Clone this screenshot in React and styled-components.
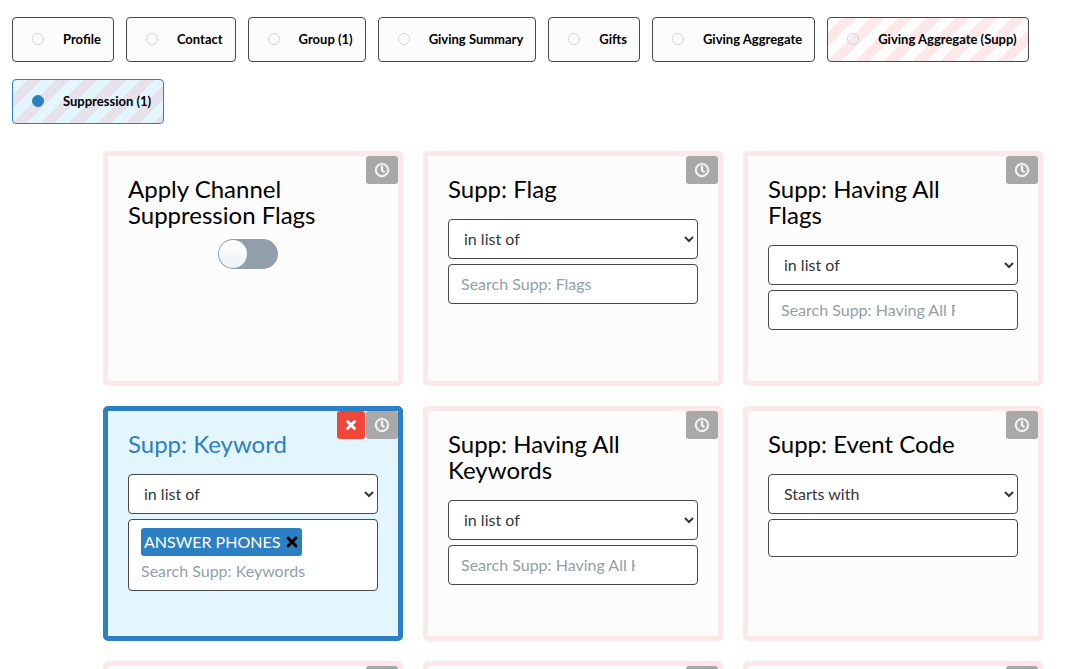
import React, { useState } from "react";
import styled, { createGlobalStyle } from "styled-components";
import { FaRegClock, FaTimes } from "react-icons/fa";

const GlobalStyle = createGlobalStyle`
  * {
    box-sizing: border-box;
  }
  body {
    margin: 0;
    background: #fff;
    color: #000;
    font-family: Lato, "Liberation Sans", sans-serif;
    font-size: 16px;
  }
`;

const Page = styled.main`
  height: 100vh;
  overflow: hidden;
  padding: 17px 12px 0;
`;

const Tabs = styled.div`
  display: flex;
  flex-wrap: wrap;
  gap: 17px 12px;
`;

const Tab = styled.label`
  display: flex;
  align-items: center;
  gap: 19px;
  height: 45px;
  padding: 0 12px 2px 19px;
  border: 1px solid ${(p) => (p.$active ? "#2d7fc3" : "#484848")};
  border-radius: 4px;
  background: ${(p) => {
    const base = p.$active ? "#e3f6fe" : "#fcfcfc";
    const stripe = p.$active ? "#e5e2eb" : "#fce8e8";
    return p.$striped
      ? `repeating-linear-gradient(135deg, ${base} 0 10px, ${stripe} 10px 20px)`
      : base;
  }};
  font-size: 13px;
  font-weight: 700;
  white-space: nowrap;
  cursor: pointer;
`;

const TabRadio = styled.input`
  appearance: none;
  width: 12px;
  height: 12px;
  margin: 0;
  border: 1px solid #c6d9e2;
  border-radius: 50%;

  &:checked {
    border-color: #2d7fc3;
    background: #2d7fc3;
  }
`;

const Grid = styled.div`
  display: grid;
  grid-template-columns: repeat(auto-fill, 300px);
  justify-content: center;
  gap: 20px;
  margin-top: 27px;
  padding-left: 68px;
`;

const Card = styled.section`
  position: relative;
  min-height: 235px;
  padding: 20px;
  border: 5px solid ${(p) => (p.$active ? "#2d7fc3" : "#fce8e8")};
  border-radius: 5px;
  background: ${(p) => (p.$active ? "#e3f6fe" : "#fcfcfc")};
`;

const CardActions = styled.div`
  position: absolute;
  top: 0;
  right: 0;
  display: flex;
  gap: 1px;
`;

const ActionButton = styled.button`
  display: flex;
  align-items: center;
  justify-content: center;
  width: ${(p) => (p.$danger ? "28px" : "32px")};
  height: 28px;
  padding: 0;
  border: 0;
  border-radius: 3px;
  background: ${(p) => (p.$danger ? "#f04537" : "#a8a8a8")};
  color: #fff;
  font-size: 14px;
  cursor: pointer;

  svg {
    overflow: visible;
    stroke-width: 20px;
  }
`;

const CardTitle = styled.h2`
  max-width: 200px;
  margin: 0;
  color: ${(p) => (p.$active ? "#2d7fc3" : "#000")};
  font-size: 24px;
  font-weight: 400;
  line-height: 26px;
`;

const Fields = styled.div`
  display: flex;
  flex-direction: column;
  gap: 5px;
  margin-top: 17px;
`;

const Select = styled.select`
  width: 100%;
  height: 40px;
  padding: 0 0 2px 11px;
  border: 1px solid #484848;
  border-radius: 4px;
  background: #fff;
  color: #363636;
  font: inherit;
`;

const SearchBox = styled.div`
  display: flex;
  flex-direction: column;
  align-items: flex-start;
  gap: 4px;
  padding: 8px 12px;
  border: 1px solid #484848;
  border-radius: 4px;
  background: #fff;
`;

const SearchInput = styled.input`
  width: 174px;
  height: 22px;
  padding: 0 0 2px;
  border: 0;
  outline: 0;
  background: transparent;
  font: inherit;

  &::placeholder {
    color: #929fa6;
  }
`;

const TextInput = styled.input`
  width: 100%;
  height: 38px;
  padding: 0 12px;
  border: 1px solid #484848;
  border-radius: 4px;
  background: #fff;
  font: inherit;
`;

const Tag = styled.span`
  display: flex;
  align-items: center;
  gap: 4px;
  height: 28px;
  padding: 0 2px 1px 3px;
  border-radius: 3px;
  background: #2d7fc3;
  color: #fff;
`;

const TagRemove = styled.button`
  display: flex;
  padding: 0;
  border: 0;
  background: none;
  color: #000;
  font-size: 16px;
  cursor: pointer;
`;

const ToggleRow = styled.div`
  display: flex;
  justify-content: center;
  margin-top: 11px;
  padding-right: 10px;
`;

const Toggle = styled.input`
  appearance: none;
  display: flex;
  width: 60px;
  height: 30px;
  margin: 0;
  padding: 1px;
  border-radius: 15px;
  background: #929fab;
  cursor: pointer;

  &::before {
    content: "";
    width: 28px;
    height: 28px;
    border-radius: 50%;
    background: linear-gradient(#fff, #ecf2f6);
  }

  &:checked {
    justify-content: flex-end;
    background: #2d7fc3;
  }
`;

const tabs = [
  { label: "Profile" },
  { label: "Contact" },
  { label: "Group (1)" },
  { label: "Giving Summary" },
  { label: "Gifts" },
  { label: "Giving Aggregate" },
  { label: "Giving Aggregate (Supp)", striped: true },
  { label: "Suppression (1)", striped: true },
];

const filters = [
  { id: "channel", title: "Apply Channel Suppression Flags", type: "toggle" },
  { id: "flag", title: "Supp: Flag", type: "search", placeholder: "Search Supp: Flags" },
  {
    id: "all-flags",
    title: "Supp: Having All Flags",
    type: "search",
    placeholder: "Search Supp: Having All Flags",
  },
  {
    id: "keyword",
    title: "Supp: Keyword",
    type: "search",
    placeholder: "Search Supp: Keywords",
    values: ["ANSWER PHONES"],
  },
  {
    id: "all-keywords",
    title: "Supp: Having All Keywords",
    type: "search",
    placeholder: "Search Supp: Having All Keywords",
  },
  { id: "event-code", title: "Supp: Event Code", type: "text" },
  { id: "extra-1" },
  { id: "extra-2" },
  { id: "extra-3" },
];

function FilterCard({ filter }) {
  const [values, setValues] = useState(filter.values || []);
  const active = values.length > 0;
  const titleId = `${filter.id}-title`;

  return (
    <Card $active={active}>
      <CardActions>
        {active && (
          <ActionButton $danger type="button" aria-label="Clear" onClick={() => setValues([])}>
            <FaTimes />
          </ActionButton>
        )}
        <ActionButton type="button" aria-label="History">
          <FaRegClock />
        </ActionButton>
      </CardActions>
      {filter.title && (
        <CardTitle id={titleId} $active={active}>
          {filter.title}
        </CardTitle>
      )}
      {filter.type === "toggle" && (
        <ToggleRow>
          <Toggle type="checkbox" role="switch" aria-labelledby={titleId} />
        </ToggleRow>
      )}
      {filter.type === "search" && (
        <Fields>
          <Select aria-labelledby={titleId}>
            <option>in list of</option>
          </Select>
          <SearchBox>
            {values.map((value) => (
              <Tag key={value}>
                {value}
                <TagRemove
                  type="button"
                  aria-label={`Remove ${value}`}
                  onClick={() => setValues(values.filter((v) => v !== value))}
                >
                  <FaTimes />
                </TagRemove>
              </Tag>
            ))}
            <SearchInput type="text" placeholder={filter.placeholder} aria-labelledby={titleId} />
          </SearchBox>
        </Fields>
      )}
      {filter.type === "text" && (
        <Fields>
          <Select aria-labelledby={titleId}>
            <option>Starts with</option>
          </Select>
          <TextInput type="text" aria-labelledby={titleId} />
        </Fields>
      )}
    </Card>
  );
}

export default function App() {
  const [tab, setTab] = useState("Suppression (1)");

  return (
    <Page>
      <GlobalStyle />
      <Tabs role="radiogroup" aria-label="Filter group">
        {tabs.map(({ label, striped }) => (
          <Tab key={label} $striped={striped} $active={tab === label}>
            <TabRadio
              type="radio"
              name="filter-group"
              checked={tab === label}
              onChange={() => setTab(label)}
            />
            {label}
          </Tab>
        ))}
      </Tabs>
      <Grid>
        {filters.map((filter) => (
          <FilterCard key={filter.id} filter={filter} />
        ))}
      </Grid>
    </Page>
  );
}
